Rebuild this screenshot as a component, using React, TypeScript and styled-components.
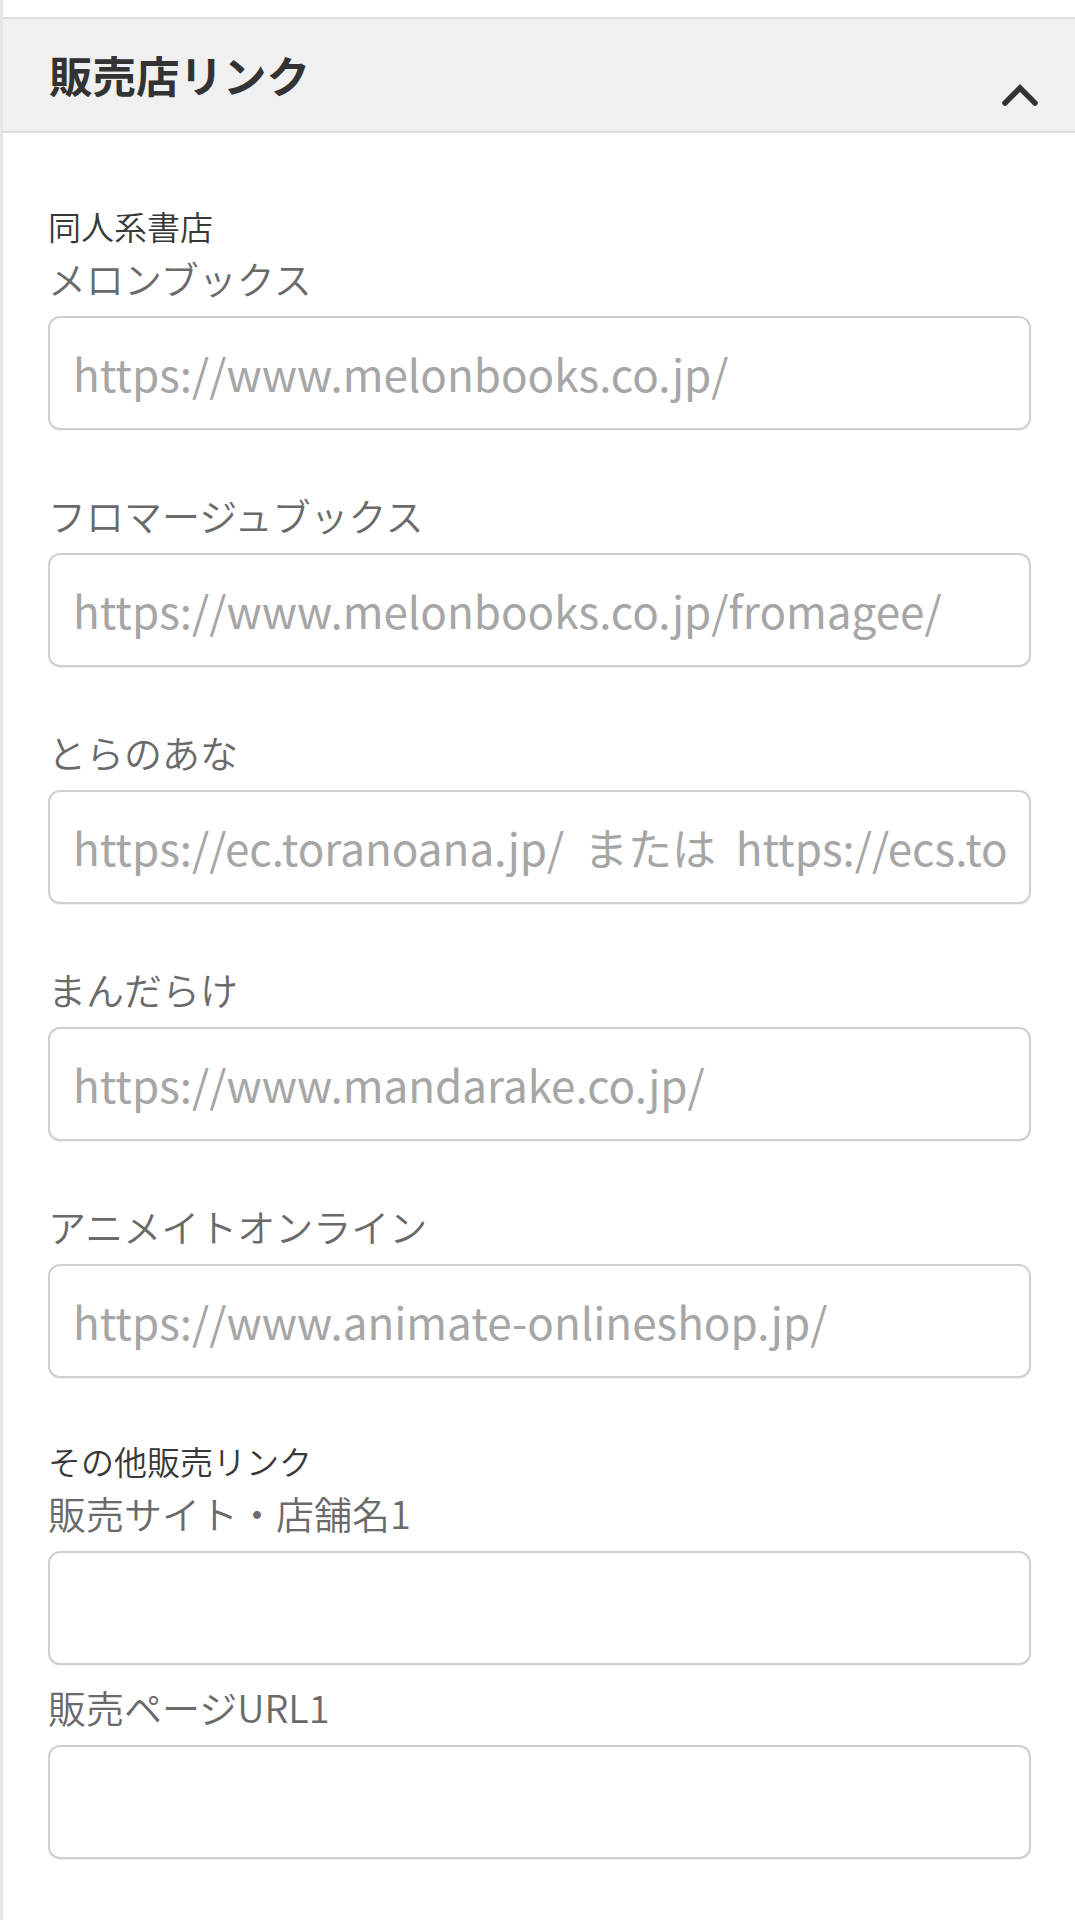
import React from "react";
import styled, { createGlobalStyle } from "styled-components";

const LIGHT_STACK = `"Noto Sans CJK JP DemiLight", "Noto Sans CJK JP Light", "Noto Sans CJK JP", "Noto Sans", sans-serif`;

const GlobalStyle = createGlobalStyle`
  html, body {
    margin: 0;
    padding: 0;
    background: #ffffff;
  }
  body {
    font-family: "Noto Sans CJK JP", "Noto Sans", sans-serif;
    color: #333333;
  }
  * { box-sizing: border-box; }
`;

const Page = styled.div`
  min-height: 1920px;
  border-left: 3px solid #e6e6e6;
  padding-top: 17px;
  background: #ffffff;
`;

const Header = styled.div`
  display: flex;
  align-items: center;
  justify-content: space-between;
  height: 116px;
  padding: 0 37px 0 46px;
  background: #f0f0f0;
  border-top: 2px solid #dddddd;
  border-bottom: 2px solid #dddddd;
`;

const Title = styled.h2`
  margin: 0;
  font-size: 43.5px;
  line-height: 60px;
  font-weight: 700;
  color: #333333;
`;

const ToggleIcon = styled.svg`
  align-self: flex-end;
  margin-bottom: 25px;
  width: 36px;
  height: 22px;
`;

const Body = styled.div`
  padding: 69px 44px 0 45px;
`;

const Section = styled.section<{ $gap?: number }>`
  margin-top: ${(p) => p.$gap ?? 0}px;
`;

const SectionTitle = styled.div`
  font-family: ${LIGHT_STACK};
  font-size: 33px;
  line-height: 48px;
  font-weight: 400;
  color: #383838;
`;

const Field = styled.div<{ $gap?: number }>`
  margin-top: ${(p) => p.$gap ?? 0}px;
`;

const Label = styled.label`
  display: block;
  font-family: ${LIGHT_STACK};
  font-size: 38px;
  line-height: 56px;
  font-weight: 300;
  color: #6a6a6a;
`;

const Input = styled.input`
  display: block;
  width: 100%;
  height: 114px;
  margin-top: 10px;
  padding: 0 23px;
  border: 2px solid #cfcfcf;
  border-radius: 12px;
  background: #ffffff;
  box-shadow: 0 1px 1px rgba(0, 0, 0, 0.06);
  font-family: "Noto Sans CJK JP", "Noto Sans", sans-serif;
  font-size: 44px;
  color: #333333;
  outline: none;

  &::placeholder {
    color: #a6a6a6;
    opacity: 1;
  }
`;

const shops = [
  { label: "メロンブックス", placeholder: "https://www.melonbooks.co.jp/" },
  { label: "フロマージュブックス", placeholder: "https://www.melonbooks.co.jp/fromagee/" },
  {
    label: "とらのあな",
    placeholder: "https://ec.toranoana.jp/  または  https://ecs.toranoana.jp/",
  },
  { label: "まんだらけ", placeholder: "https://www.mandarake.co.jp/" },
  { label: "アニメイトオンライン", placeholder: "https://www.animate-onlineshop.jp/" },
];

export default function App() {
  return (
    <>
      <GlobalStyle />
      <Page>
        <Header>
          <Title>販売店リンク</Title>
          <ToggleIcon viewBox="0 0 36 22" aria-hidden="true">
            <polyline
              points="3,19 18,4 33,19"
              fill="none"
              stroke="#333333"
              strokeWidth="5.5"
              strokeLinejoin="miter"
              strokeLinecap="round"
            />
          </ToggleIcon>
        </Header>
        <Body>
          <Section>
            <SectionTitle>同人系書店</SectionTitle>
            {shops.map((s, i) => (
              <Field key={s.label} $gap={i === 0 ? 0 : 57}>
                <Label>{s.label}</Label>
                <Input type="text" placeholder={s.placeholder} />
              </Field>
            ))}
          </Section>
          <Section $gap={59}>
            <SectionTitle>その他販売リンク</SectionTitle>
            <Field>
              <Label>販売サイト・店舗名1</Label>
              <Input type="text" />
            </Field>
            <Field $gap={14}>
              <Label>販売ページURL1</Label>
              <Input type="text" />
            </Field>
          </Section>
        </Body>
      </Page>
    </>
  );
}
